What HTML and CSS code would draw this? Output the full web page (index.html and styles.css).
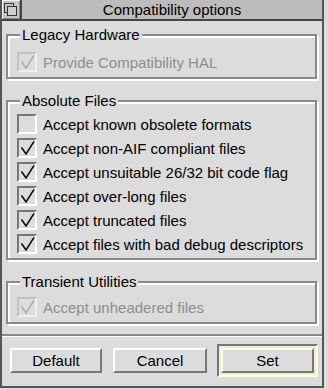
FILE: index.html
```html
<!DOCTYPE html>
<html lang="en">
<head>
    <meta charset="UTF-8">
    <meta name="viewport" content="width=device-width, initial-scale=1.0">
    <title>Compatibility options</title>
    <link rel="stylesheet" href="styles.css">
</head>
<body>
    <div class="window">
        <div class="titlebar">
            <div class="back-icon">
                <svg width="14" height="14" viewBox="0 0 14 14">
                    <rect x="0.5" y="0.5" width="9" height="9" fill="none" stroke="#333"/>
                    <rect x="3.5" y="3.5" width="9" height="9" fill="#cfcfcf" stroke="#333"/>
                </svg>
            </div>
            <div class="title">Compatibility options</div>
        </div>

        <div class="groups">
            <div class="group legacy">
                <span class="group-label">Legacy Hardware</span>
                <div class="row disabled">
                    <span class="tick"><svg width="16" height="16" viewBox="0 0 16 16"><polyline points="2.5,7.5 7,14 15,1.5"/></svg></span>
                    <span>Provide Compatibility HAL</span>
                </div>
            </div>

            <div class="group absolute">
                <span class="group-label">Absolute Files</span>
                <div class="rows">
                    <div class="row">
                        <span class="tick"></span>
                        <span>Accept known obsolete formats</span>
                    </div>
                    <div class="row">
                        <span class="tick"><svg width="16" height="16" viewBox="0 0 16 16"><polyline points="2.5,7.5 7,14 15,1.5"/></svg></span>
                        <span>Accept non-AIF compliant files</span>
                    </div>
                    <div class="row">
                        <span class="tick"><svg width="16" height="16" viewBox="0 0 16 16"><polyline points="2.5,7.5 7,14 15,1.5"/></svg></span>
                        <span>Accept unsuitable 26/32 bit code flag</span>
                    </div>
                    <div class="row">
                        <span class="tick"><svg width="16" height="16" viewBox="0 0 16 16"><polyline points="2.5,7.5 7,14 15,1.5"/></svg></span>
                        <span>Accept over-long files</span>
                    </div>
                    <div class="row">
                        <span class="tick"><svg width="16" height="16" viewBox="0 0 16 16"><polyline points="2.5,7.5 7,14 15,1.5"/></svg></span>
                        <span>Accept truncated files</span>
                    </div>
                    <div class="row">
                        <span class="tick"><svg width="16" height="16" viewBox="0 0 16 16"><polyline points="2.5,7.5 7,14 15,1.5"/></svg></span>
                        <span>Accept files with bad debug descriptors</span>
                    </div>
                </div>
            </div>

            <div class="group transient">
                <span class="group-label">Transient Utilities</span>
                <div class="row disabled">
                    <span class="tick"><svg width="16" height="16" viewBox="0 0 16 16"><polyline points="2.5,7.5 7,14 15,1.5"/></svg></span>
                    <span>Accept unheadered files</span>
                </div>
            </div>
        </div>

        <div class="separator"></div>

        <div class="buttons">
            <button class="btn btn-default">Default</button>
            <button class="btn btn-cancel">Cancel</button>
            <div class="default-ring">
                <button class="btn btn-set">Set</button>
            </div>
        </div>
    </div>
</body>
</html>
```
FILE: styles.css
```css
body {
    margin: 0;
    background-color: #dcdcdc;
    font-family: "Liberation Sans", Arial, sans-serif;
    font-size: 15px;
    color: #000;
}
.window {
    width: 324px;
    height: 388px;
    box-sizing: border-box;
    border-left: 2px solid #555;
    border-right: 2px solid #555;
    border-bottom: 2px solid #555;
    background-color: #dcdcdc;
}
.titlebar {
    display: flex;
    height: 19px;
    border-bottom: 2px solid #444;
    background-color: #bcbcbc;
}
.back-icon {
    width: 18px;
    display: flex;
    align-items: center;
    justify-content: center;
    border-right: 2px solid #444;
    background-color: #c6c6c6;
    box-shadow: inset 1px 1px 0 #f2f2f2, inset -1px -1px 0 #8a8a8a;
}
.title {
    flex: 1;
    text-align: center;
    line-height: 19px;
}
.groups {
    padding: 13px 5px 0 4px;
}
.group {
    position: relative;
    border: 2px solid #8a8a8a;
    box-shadow: inset 2px 2px 0 #fff, 2px 2px 0 #fff;
}
.group-label {
    position: absolute;
    top: -10px;
    left: 12px;
    padding: 0 2px;
    line-height: 18px;
    background-color: #dcdcdc;
}
.legacy {
    padding: 16px 9px 5px;
    margin-bottom: 21px;
}
.absolute {
    padding: 12px 9px 4px;
    margin-bottom: 21px;
}
.transient {
    padding: 14px 9px 5px;
}
.rows {
    display: flex;
    flex-direction: column;
    gap: 4px;
}
.row {
    display: flex;
    align-items: center;
    gap: 6px;
    height: 20px;
}
.tick {
    width: 20px;
    height: 20px;
    box-sizing: border-box;
    border: 2px solid;
    border-color: #777 #fff #fff #777;
    background-color: #dcdcdc;
}
.tick svg {
    display: block;
    fill: none;
    stroke: #000;
    stroke-width: 1.4;
}
.disabled {
    color: #8e8e8e;
}
.disabled .tick {
    border-color: #c2c2c2 #f0f0f0 #f0f0f0 #c2c2c2;
}
.disabled .tick svg {
    stroke: #ababab;
}
.separator {
    margin-top: 10px;
    height: 2px;
    background-color: #888;
    border-bottom: 1px solid #fff;
}
.buttons {
    display: flex;
    align-items: center;
    margin-top: 7px;
    padding-left: 8px;
}
.btn {
    box-sizing: border-box;
    height: 25px;
    padding: 0;
    border: 2px solid;
    border-color: #fff #777 #777 #fff;
    background-color: #dcdcdc;
    font: inherit;
    color: #000;
}
.btn-default {
    width: 92px;
    margin-right: 11px;
}
.btn-cancel {
    width: 94px;
    margin-right: 10px;
}
.default-ring {
    width: 101px;
    box-sizing: border-box;
    display: flex;
    padding: 2px;
    border: 2px solid;
    border-color: #777 #fbfbe4 #fbfbe4 #777;
    background-color: #efefcc;
}
.btn-set {
    flex: 1;
}
```
